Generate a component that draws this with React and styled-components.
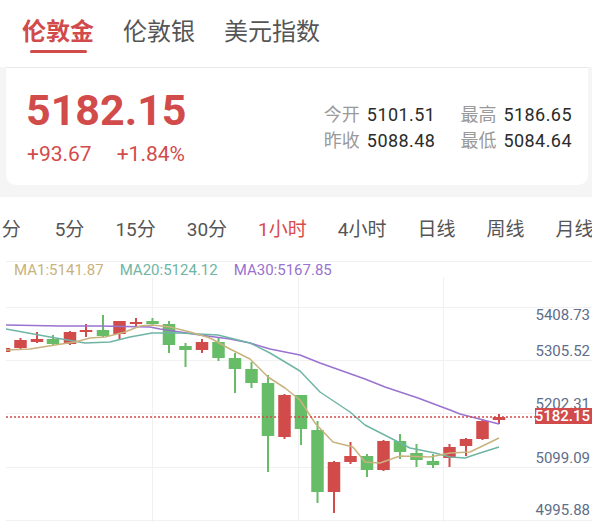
import React from "react";
import styled, { createGlobalStyle } from "styled-components";

const GlobalStyle = createGlobalStyle`
  html, body {
    margin: 0;
    padding: 0;
    background: #f5f5f5;
    font-family: Roboto, "Noto Sans CJK SC", sans-serif;
  }
`;

const RED = "#d24b4b";
const GREEN = "#67bc67";

const tabs = ["伦敦金", "伦敦银", "美元指数"];
const periods = ["1分", "5分", "15分", "30分", "1小时", "4小时", "日线", "周线", "月线"];

const legend = [
  { name: "MA1", value: "5141.87", color: "#c8b37e" },
  { name: "MA20", value: "5124.12", color: "#6fb5a5" },
  { name: "MA30", value: "5167.85", color: "#9a72cf" },
];

// screen coords: x, bodyTop, bodyBottom, wickTop, wickBottom, rise
const candles = [
  [4, 348, 352, 346, 354, true],
  [20.5, 340, 348, 338, 350, true],
  [37, 339, 342, 332, 343, true],
  [53, 339, 344, 335, 345, false],
  [70, 332, 344, 331, 345, true],
  [86, 330, 332, 324, 337, true],
  [103, 330, 336, 315, 337, false],
  [119.5, 321, 334, 321, 339, true],
  [136, 322, 324, 318, 326, true],
  [152.5, 321, 324, 318, 326, false],
  [169, 324, 345, 321, 353, false],
  [185.5, 346, 350, 343, 367, false],
  [202, 342, 350, 339, 353, true],
  [218.5, 342, 358, 337, 361, false],
  [235, 358, 369, 353, 393, false],
  [251.5, 369, 383, 362, 388, false],
  [268, 383, 436, 375, 472, false],
  [284.5, 395, 437, 394, 439, true],
  [301, 395, 429, 395, 445, false],
  [317.5, 430, 492, 421, 503, false],
  [334, 462, 492, 461, 513, true],
  [350.5, 456, 462, 442, 464, true],
  [367, 456, 470, 454, 477, false],
  [383.5, 441, 470, 440, 471, true],
  [400, 441, 452, 434, 459, false],
  [416.5, 453, 460, 444, 467, false],
  [433, 461, 465, 454, 468, false],
  [449.5, 447, 458, 444, 467, true],
  [466, 439, 446, 438, 456, true],
  [482.5, 421, 439, 419, 440, true],
  [499, 417, 420, 414, 424, true],
];

const ma1 = [
  [6, 350], [30, 349], [55, 345], [75, 342], [90, 338], [105, 337], [125, 332],
  [140, 326], [152, 325], [170, 327], [190, 332], [210, 338], [230, 349],
  [250, 359], [268, 377], [285, 388], [300, 400], [315, 423], [333, 442],
  [353, 447], [365, 462], [380, 463], [400, 456], [430, 457], [450, 453],
  [470, 452], [499, 438],
];

const ma20 = [
  [6, 329], [50, 337], [85, 343], [110, 342], [130, 337], [152, 333], [180, 333],
  [218, 335], [250, 343], [270, 353], [300, 371], [320, 392], [350, 412],
  [365, 425], [410, 448], [435, 453], [450, 457], [465, 458], [480, 453],
  [499, 447],
];

const ma30 = [
  [6, 325], [60, 326], [100, 326], [150, 327], [160, 329], [200, 335],
  [230, 339], [250, 343], [270, 349], [300, 355], [320, 363], [365, 379],
  [385, 387], [418, 398], [450, 410], [460, 414], [499, 424],
];

const axis = [
  { label: "5408.73", y: 315 },
  { label: "5305.52", y: 351 },
  { label: "5202.31", y: 404 },
  { label: "5099.09", y: 458 },
  { label: "4995.88", y: 510 },
];

const TOP = 277;
const sy = (y) => y - TOP;
const pts = (arr) => arr.map(([x, y]) => `${x},${sy(y)}`).join(" ");

const App = () => {
  return (
    <Page>
      <GlobalStyle />
      <TabBar>
        {tabs.map((t, i) => (
          <Tab key={t} $active={i === 0}>
            {t}
          </Tab>
        ))}
      </TabBar>

      <PriceCard>
        <Quote>
          <BigPrice>5182.15</BigPrice>
          <ChangeRow>
            <span>+93.67</span>
            <span>+1.84%</span>
          </ChangeRow>
        </Quote>
        <Stats>
          <Stat>
            <StatLabel>今开</StatLabel>
            <StatValue>5101.51</StatValue>
          </Stat>
          <Stat>
            <StatLabel>最高</StatLabel>
            <StatValue>5186.65</StatValue>
          </Stat>
          <Stat>
            <StatLabel>昨收</StatLabel>
            <StatValue>5088.48</StatValue>
          </Stat>
          <Stat>
            <StatLabel>最低</StatLabel>
            <StatValue>5084.64</StatValue>
          </Stat>
        </Stats>
      </PriceCard>

      <PeriodBar>
        <PeriodTrack>
          {periods.map((p) => (
            <Period key={p} $active={p === "1小时"}>
              {p}
            </Period>
          ))}
        </PeriodTrack>
      </PeriodBar>

      <Chart>
        <Legend>
          {legend.map((m) => (
            <LegendItem key={m.name} $color={m.color}>
              {m.name}:{m.value}
            </LegendItem>
          ))}
        </Legend>
        <ChartSvg width="592" height="245" viewBox="0 0 592 245">
          <defs>
            <clipPath id="plot">
              <rect x="6" y="0" width="529" height="245" />
            </clipPath>
          </defs>
          <g stroke="#f1f1f1" strokeWidth="1">
            {[307, 360, 413, 467, 520].map((y) => (
              <line key={y} x1="6" x2="592" y1={sy(y) + 0.5} y2={sy(y) + 0.5} />
            ))}
            {[152, 298, 443].map((x) => (
              <line key={x} x1={x + 0.5} x2={x + 0.5} y1="0" y2="245" />
            ))}
          </g>
          <g clipPath="url(#plot)">
            {candles.map(([x, bt, bb, wt, wb, rise], i) => {
              const c = rise ? RED : GREEN;
              return (
                <g key={i} fill={c}>
                  <rect x={x - 1} y={sy(wt)} width="2" height={wb - wt} />
                  <rect
                    x={x - 6.25}
                    y={sy(bt)}
                    width="12.5"
                    height={Math.max(bb - bt, 2)}
                  />
                </g>
              );
            })}
            <polyline points={pts(ma30)} fill="none" stroke="#9a72cf" strokeWidth="1.5" strokeLinejoin="round" />
            <polyline points={pts(ma20)} fill="none" stroke="#6fb5a5" strokeWidth="1.5" strokeLinejoin="round" />
            <polyline points={pts(ma1)} fill="none" stroke="#c8b37e" strokeWidth="1.5" strokeLinejoin="round" />
          </g>
          <line
            x1="6"
            x2="535"
            y1={sy(417)}
            y2={sy(417)}
            stroke={RED}
            strokeWidth="1.5"
            strokeDasharray="2 2"
          />
          <g fontFamily="Roboto, sans-serif" fontSize="15" fill="#5e6d8a" textAnchor="end">
            {axis.map((a) => (
              <text key={a.label} x="590" y={sy(a.y) + 5.3}>
                {a.label}
              </text>
            ))}
          </g>
          <rect x="535" y={sy(408)} width="57" height="16" fill={RED} />
          <text
            x="590"
            y={sy(416) + 5.3}
            textAnchor="end"
            fontFamily="Roboto, sans-serif"
            fontSize="15"
            fontWeight="500"
            fill="#fff"
          >
            5182.15
          </text>
        </ChartSvg>
      </Chart>
    </Page>
  );
};

export default App;

const Page = styled.div`
  width: 592px;
  height: 522px;
  overflow: hidden;
  background: #f5f5f5;
`;

const TabBar = styled.div`
  height: 67px;
  box-sizing: border-box;
  background: #fff;
  display: flex;
  align-items: flex-start;
  gap: 29px;
  padding: 18px 0 0 22px;
`;

const Tab = styled.div`
  position: relative;
  font-size: 24px;
  line-height: 28px;
  font-weight: ${(p) => (p.$active ? 700 : 400)};
  color: ${(p) => (p.$active ? RED : "#555")};

  &::after {
    content: "";
    display: ${(p) => (p.$active ? "block" : "none")};
    position: absolute;
    top: 32px;
    left: 50%;
    width: 57px;
    height: 3px;
    margin-left: -28.5px;
    border-radius: 2px;
    background: ${RED};
  }
`;

const PriceCard = styled.div`
  height: 118px;
  box-sizing: border-box;
  margin: 0 4px 12px 6px;
  padding: 21px 16px 0 20px;
  background: #fff;
  border-top: 1px solid #e9e9e9;
  border-radius: 0 0 10px 10px;
  display: flex;
  justify-content: space-between;
  align-items: flex-start;
`;

const Quote = styled.div`
  display: flex;
  flex-direction: column;
  color: ${RED};
`;

const BigPrice = styled.div`
  font-size: 43px;
  line-height: 43px;
  font-weight: 700;
`;

const ChangeRow = styled.div`
  display: flex;
  gap: 25px;
  margin-top: 12px;
  font-size: 21px;
  line-height: 21px;
  padding-left: 1px;
`;

const Stats = styled.div`
  display: grid;
  grid-template-columns: auto auto;
  column-gap: 25px;
  margin-top: 13px;
`;

const Stat = styled.div`
  display: flex;
  gap: 7px;
  font-size: 18px;
  line-height: 25.5px;
`;

const StatLabel = styled.span`
  color: #9a9a9a;
`;

const StatValue = styled.span`
  color: #2b2b2b;
  letter-spacing: 0.45px;
`;

const PeriodBar = styled.div`
  height: 64px;
  background: #fff;
  overflow: hidden;
  display: flex;
  align-items: center;
`;

const PeriodTrack = styled.div`
  display: flex;
  gap: 31px;
  margin-left: -9px;
  white-space: nowrap;
  padding-top: 2px;
`;

const Period = styled.span`
  font-size: 19px;
  line-height: 24px;
  color: ${(p) => (p.$active ? "#d94a4a" : "#555")};

  &:first-child {
    margin-right: 3px;
  }
`;

const Chart = styled.div`
  background: #fff;
  height: 261px;
`;

const Legend = styled.div`
  margin-left: 6px;
  border-top: 1px solid #efefef;
  height: 15px;
  display: flex;
  gap: 16px;
  padding-left: 8px;
`;

const LegendItem = styled.span`
  font-size: 15px;
  line-height: 16px;
  color: ${(p) => p.$color};
`;

const ChartSvg = styled.svg`
  display: block;
`;
